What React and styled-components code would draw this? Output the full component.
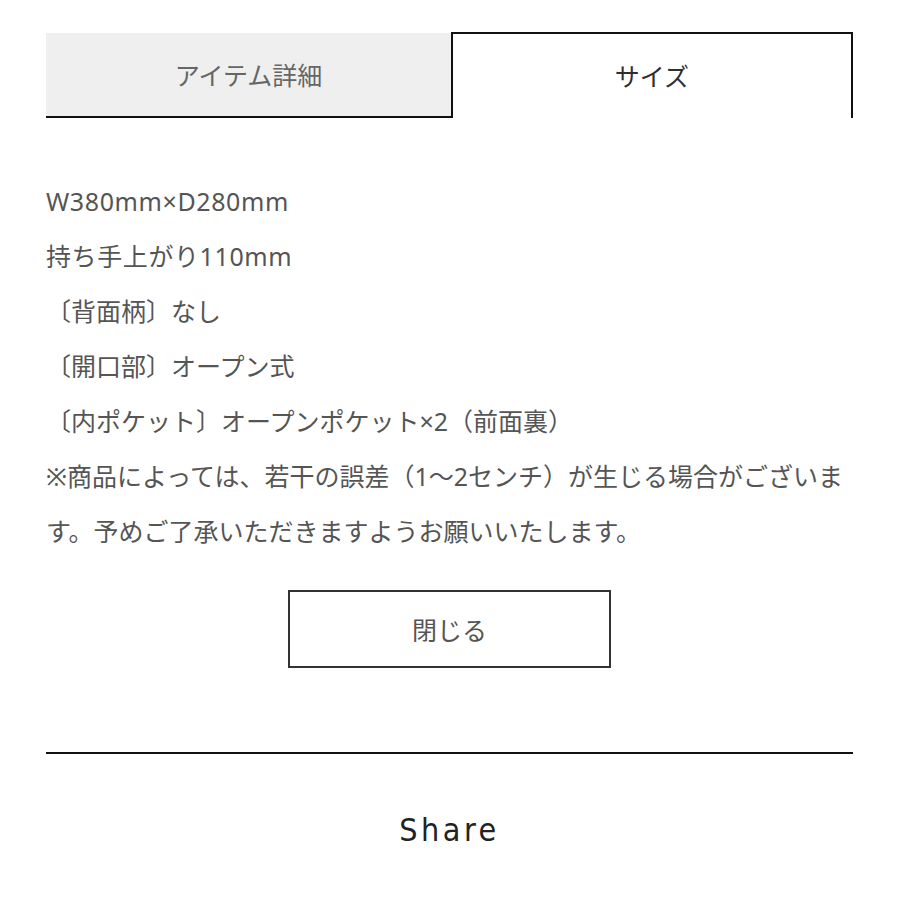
import React, { useState } from "react";
import styled, { createGlobalStyle } from "styled-components";

const Global = createGlobalStyle`
  body {
    margin: 0;
    background: #fff;
    font-family: "Noto Sans", "Noto Sans CJK JP", sans-serif;
  }
`;

const Page = styled.div`
  width: 807px;
  margin-left: 46px;
  padding-top: 32px;
`;

const Tabs = styled.div`
  display: flex;
  height: 86px;
`;

const Tab = styled.button`
  flex: ${(p) => (p.$first ? "0 0 405px" : "1")};
  display: flex;
  align-items: center;
  justify-content: center;
  font-family: inherit;
  font-size: 25px;
  cursor: pointer;
  box-sizing: border-box;
  padding: 0 0 2px;
  background: ${(p) => (p.$active ? "#fff" : "#efefef")};
  color: ${(p) => (p.$active ? "#2e2e2e" : "#666")};
  border: none;
  border-bottom: ${(p) => (p.$active ? "none" : "2px solid #111")};
  margin-top: ${(p) => (p.$active ? "0" : "1px")};
  ${(p) =>
    p.$active &&
    `
    border-left: 2px solid #111;
    border-top: 2px solid #111;
    border-right: 2px solid #111;
  `}
`;

const Body = styled.div`
  padding-top: 56px;
  color: #555;
  font-size: 25px;
  line-height: 55px;
`;

const Line = styled.p`
  margin: 0;
  letter-spacing: ${(p) => (p.$latin ? "0.6px" : "0")};
`;

const CloseRow = styled.div`
  display: flex;
  justify-content: center;
  margin-top: 31px;
`;

const CloseButton = styled.button`
  width: 323px;
  height: 78px;
  box-sizing: border-box;
  border: 2px solid #333;
  background: #fff;
  color: #555;
  font-family: inherit;
  font-size: 25px;
  cursor: pointer;
`;

const Divider = styled.hr`
  margin: 84px 0 0;
  border: none;
  border-top: 2px solid #111;
`;

const Share = styled.div`
  text-align: center;
  margin-top: 57px;
  font-family: "Liberation Sans Narrow", "DejaVu Sans Condensed", Arial, sans-serif;
  font-size: 32px;
  letter-spacing: 3.5px;
  color: #222;
`;

const lines = [
  "W380mm×D280mm",
  "持ち手上がり110mm",
  "〔背面柄〕なし",
  "〔開口部〕オープン式",
  "〔内ポケット〕オープンポケット×2（前面裏）",
  "※商品によっては、若干の誤差（1〜2センチ）が生じる場合がございます。予めご了承いただきますようお願いいたします。",
];

export default function App() {
  const [tab, setTab] = useState(1);
  return (
    <Page>
      <Global />
      <Tabs>
        <Tab $first $active={tab === 0} onClick={() => setTab(0)}>
          アイテム詳細
        </Tab>
        <Tab $active={tab === 1} onClick={() => setTab(1)}>
          サイズ
        </Tab>
      </Tabs>
      <Body>
        {lines.map((l, i) => (
          <Line key={l} $latin={i < 2}>
            {l}
          </Line>
        ))}
      </Body>
      <CloseRow>
        <CloseButton>閉じる</CloseButton>
      </CloseRow>
      <Divider />
      <Share>Share</Share>
    </Page>
  );
}
